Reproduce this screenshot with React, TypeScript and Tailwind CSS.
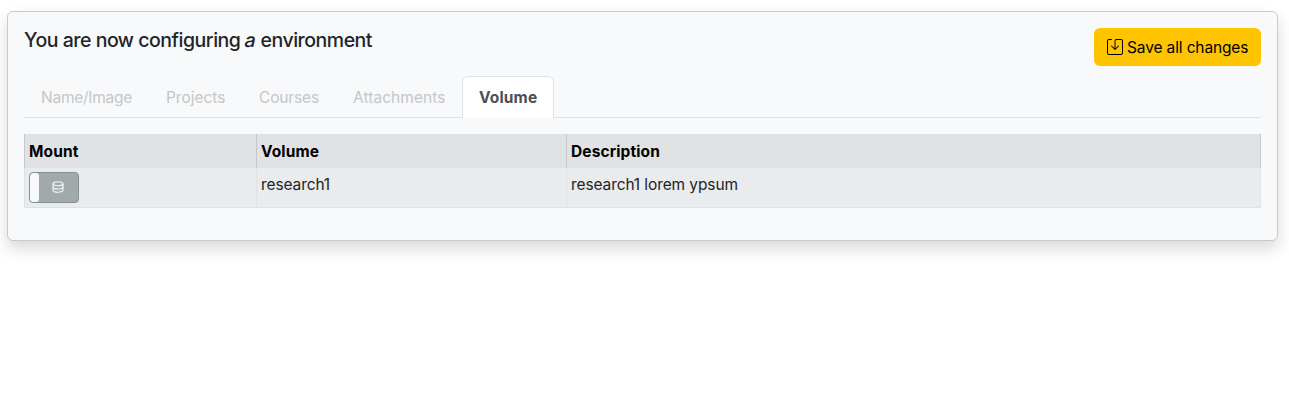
import { BsSave } from "react-icons/bs";

const tabs = [
  { label: "Name/Image", style: "w-[125px] pl-[17px] tracking-[-0.25px]" },
  { label: "Projects", style: "w-[94px] pl-[17px] tracking-[-0.03px]" },
  { label: "Courses", style: "w-[93px] pl-[16px] tracking-[-0.15px]" },
  { label: "Attachments", style: "w-[126px] pl-[17px] tracking-[0.06px]" },
];

function DatabaseIcon() {
  return (
    <svg width="12" height="12" viewBox="0 0 12 12" fill="none" stroke="currentColor" strokeWidth="1.1">
      <ellipse cx="6" cy="2.8" rx="5" ry="2" />
      <path d="M1 2.8v6.4c0 1.1 2.2 2 5 2s5-.9 5-2V2.8" />
      <path d="M1 6c0 1.1 2.2 2 5 2s5-.9 5-2" />
    </svg>
  );
}

function Tabs() {
  return (
    <nav className="flex h-[42px] border-b border-[#dee2e6] text-[15.5px] leading-6">
      {tabs.map((tab) => (
        <a key={tab.label} className={`h-[42px] shrink-0 py-[10px] whitespace-nowrap text-[#c4c6c7] ${tab.style}`}>
          {tab.label}
        </a>
      ))}
      <a className="h-[42px] w-[92px] shrink-0 rounded-t-md border border-b-0 border-[#dee2e6] bg-white py-[9px] pl-4 font-bold tracking-[0.15px] text-[#495057]">
        Volume
      </a>
    </nav>
  );
}

function MountToggle() {
  return (
    <button className="flex h-[31px] w-[50px] overflow-hidden rounded border border-[#84929a] bg-[#a2a9ab] text-[#f8f9fa]">
      <span className="h-full w-[9px] rounded-[3px] bg-[#f8f9fa]" />
      <span className="flex h-full flex-1 items-center justify-center pr-[1px] pb-[1px]">
        <DatabaseIcon />
      </span>
    </button>
  );
}

function VolumeTable() {
  return (
    <table className="mt-4 w-full table-fixed border-collapse text-left text-[15.5px] leading-6">
      <colgroup>
        <col className="w-[232px]" />
        <col className="w-[310px]" />
        <col />
      </colgroup>
      <thead>
        <tr className="h-[34px] bg-[#e1e2e4] text-black">
          {["Mount", "Volume", "Description"].map((h) => (
            <th key={h} className="border-x border-[#c6c8ca] px-1 pt-[6px] pb-1 font-bold tracking-[0.12px]">
              {h}
            </th>
          ))}
        </tr>
      </thead>
      <tbody>
        <tr className="h-[39px] bg-[#eaebed] align-top tracking-[-0.1px] text-[#212529]">
          <td className="border border-t-0 border-[#dee2e6] px-1 pt-1 pb-[4px]">
            <MountToggle />
          </td>
          <td className="border border-t-0 border-[#dee2e6] px-1 pt-[5px]">research1</td>
          <td className="border border-t-0 border-[#dee2e6] px-1 pt-[5px]">research1 lorem ypsum</td>
        </tr>
      </tbody>
    </table>
  );
}

export default function App() {
  return (
    <div className="h-[411px] overflow-hidden bg-white pt-[11px] pl-[7px] font-['Inter',sans-serif]">
      <section className="h-[230px] w-[1271px] rounded-md border border-[#c8cacc] bg-[#f8f9fb] p-4 shadow-[0_8px_16px_rgba(0,0,0,0.15)]">
        <header className="flex h-12 items-start justify-between">
          <h5 className="text-[19.5px] leading-6 font-medium tracking-[-0.48px] text-[#212529]">
            You are now configuring <em className="inline-block -skew-x-12 not-italic">a</em> environment
          </h5>
          <button className="flex h-[38px] w-[167px] items-center gap-1 rounded-md bg-[#ffc400] pl-[13px] text-[15.5px] tracking-[-0.13px] whitespace-nowrap text-black">
            <BsSave size={16} className="shrink-0" />
            <span className="pt-px">Save all changes</span>
          </button>
        </header>
        <Tabs />
        <VolumeTable />
      </section>
    </div>
  );
}
